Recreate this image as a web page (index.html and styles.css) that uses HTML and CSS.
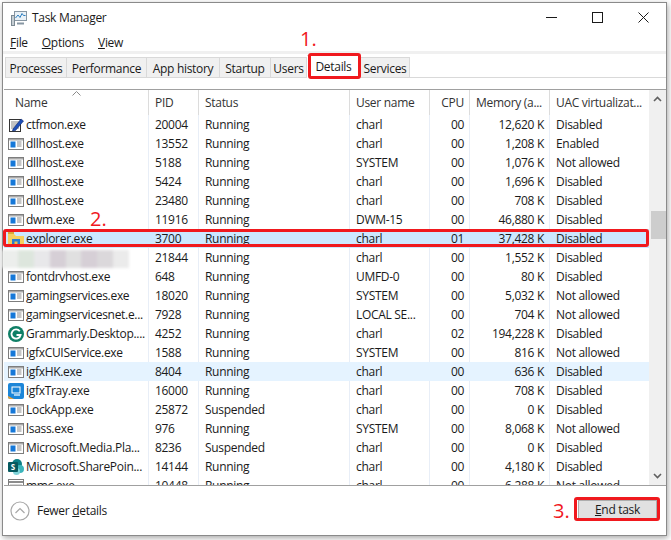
FILE: index.html
```html
<!DOCTYPE html>
<html lang="en">
<head>
<meta charset="utf-8">
<title>Task Manager</title>
<link rel="stylesheet" href="styles.css">
</head>
<body>
<svg class="defs" width="0" height="0" aria-hidden="true">
  <symbol id="exe" viewBox="0 0 16 16">
    <rect x="0.5" y="2.5" width="15" height="11" fill="#fff" stroke="#7d7d7d"/>
    <rect x="1" y="3" width="14" height="1.5" fill="#a9a9a9"/>
    <rect x="2.5" y="5.5" width="5" height="6" fill="#1678d8"/>
    <path d="M9 6h4.5M9 8h4.5M9 10h4.5" stroke="#8c8c8c"/>
  </symbol>
</svg>
<div class="window">
  <header class="titlebar">
    <svg class="app-icon" viewBox="0 0 16 16" width="16" height="16">
      <rect x="3.5" y="1.5" width="12" height="9" fill="#e9f1f7" stroke="#8796a3"/>
      <path d="M4.5 8l2.500-3 2 2.500 2-4 1.500 2h2" fill="none" stroke="#2d7fc1"/>
      <rect x="0.500" y="5.500" width="3" height="10" fill="#c5cdd3" stroke="#7c8a94"/>
      <path d="M6 13.500h7" stroke="#8796a3" stroke-width="2"/>
    </svg>
    <span class="title">Task Manager</span>
    <div class="controls">
      <svg viewBox="0 0 11 11" width="11" height="11"><path d="M0 5.500h11" stroke="#1a1a1a"/></svg>
      <svg viewBox="0 0 11 11" width="11" height="11"><rect x="0.500" y="0.500" width="10" height="10" fill="none" stroke="#1a1a1a"/></svg>
      <svg viewBox="0 0 11 11" width="11" height="11"><path d="M0.500 0.500l10 10M10.500 0.500l-10 10" stroke="#1a1a1a"/></svg>
    </div>
  </header>
  <nav class="menubar">
    <span><u>F</u>ile</span><span><u>O</u>ptions</span><span><u>V</u>iew</span>
  </nav>
  <div class="tabs-band">
    <div class="tabs">
      <span class="tab t-proc">Processes</span>
      <span class="tab t-perf">Performance</span>
      <span class="tab t-hist">App history</span>
      <span class="tab t-start">Startup</span>
      <span class="tab t-users">Users</span>
      <span class="tab active t-det">Details</span>
      <span class="tab t-serv">Services</span>
    </div>
  </div>
  <main class="panel">
    <div class="table">
      <div class="row head">
        <div class="c name">Name<svg class="sort" viewBox="0 0 9 5" width="9" height="5"><path d="M0.500 4.500l4-4 4 4" fill="none" stroke="#8a8a8a"/></svg></div>
        <div class="c">PID</div>
        <div class="c">Status</div>
        <div class="c">User name</div>
        <div class="c num">CPU</div>
        <div class="c">Memory (a...</div>
        <div class="c">UAC virtualizat...</div>
      </div>
      <div class="rows">
        <div class="row"><div class="c name"><svg class="ico" viewBox="0 0 16 16"><rect x="1.500" y="2.500" width="11" height="12" fill="#fff" stroke="#333"/><path d="M3 5h8M3 7h8M3 9h8M3 11h8" stroke="#888"/><path d="M5 12L13 2l2.500 2L7.500 13.500 4.500 14z" fill="#1e4fb8" stroke="#10286a" stroke-width=".6"/></svg>ctfmon.exe</div><div class="c">20004</div><div class="c">Running</div><div class="c">charl</div><div class="c num">00</div><div class="c num mem">12,620 K</div><div class="c">Disabled</div></div>
        <div class="row"><div class="c name"><svg class="ico"><use href="#exe"/></svg>dllhost.exe</div><div class="c">13552</div><div class="c">Running</div><div class="c">charl</div><div class="c num">00</div><div class="c num mem">1,208 K</div><div class="c">Enabled</div></div>
        <div class="row"><div class="c name"><svg class="ico"><use href="#exe"/></svg>dllhost.exe</div><div class="c">5188</div><div class="c">Running</div><div class="c">SYSTEM</div><div class="c num">00</div><div class="c num mem">1,076 K</div><div class="c">Not allowed</div></div>
        <div class="row"><div class="c name"><svg class="ico"><use href="#exe"/></svg>dllhost.exe</div><div class="c">5424</div><div class="c">Running</div><div class="c">charl</div><div class="c num">00</div><div class="c num mem">1,696 K</div><div class="c">Disabled</div></div>
        <div class="row"><div class="c name"><svg class="ico"><use href="#exe"/></svg>dllhost.exe</div><div class="c">23480</div><div class="c">Running</div><div class="c">charl</div><div class="c num">00</div><div class="c num mem">708 K</div><div class="c">Disabled</div></div>
        <div class="row"><div class="c name"><svg class="ico"><use href="#exe"/></svg>dwm.exe</div><div class="c">11916</div><div class="c">Running</div><div class="c">DWM-15</div><div class="c num">00</div><div class="c num mem">46,880 K</div><div class="c">Disabled</div></div>
        <div class="row selected"><div class="c name"><svg class="ico" viewBox="0 0 16 16"><path d="M0 3h6l2 2h8v11H0z" fill="#f6cf5f"/><path d="M0 1h6v2H0z" fill="#d9a93a"/><rect x="4" y="8" width="8" height="8" fill="#2a7fd0"/><rect x="6.500" y="10.500" width="3" height="3" fill="#f3c24a"/></svg>explorer.exe</div><div class="c">3700</div><div class="c">Running</div><div class="c">charl</div><div class="c num">01</div><div class="c num mem">37,428 K</div><div class="c">Disabled</div></div>
        <div class="row"><div class="c name"></div><div class="c">21844</div><div class="c">Running</div><div class="c">charl</div><div class="c num">00</div><div class="c num mem">1,552 K</div><div class="c">Disabled</div></div>
        <div class="row"><div class="c name"><svg class="ico"><use href="#exe"/></svg>fontdrvhost.exe</div><div class="c">648</div><div class="c">Running</div><div class="c">UMFD-0</div><div class="c num">00</div><div class="c num mem">80 K</div><div class="c">Disabled</div></div>
        <div class="row"><div class="c name"><svg class="ico"><use href="#exe"/></svg>gamingservices.exe</div><div class="c">18020</div><div class="c">Running</div><div class="c">SYSTEM</div><div class="c num">00</div><div class="c num mem">5,032 K</div><div class="c">Not allowed</div></div>
        <div class="row"><div class="c name"><svg class="ico"><use href="#exe"/></svg>gamingservicesnet.e...</div><div class="c">7928</div><div class="c">Running</div><div class="c">LOCAL SE...</div><div class="c num">00</div><div class="c num mem">704 K</div><div class="c">Not allowed</div></div>
        <div class="row"><div class="c name"><svg class="ico" viewBox="0 0 16 16"><circle cx="8" cy="8" r="8" fill="#0f7f66"/><path d="M11.800 5.300A4.600 4.600 0 1 0 12.600 9H8.500" fill="none" stroke="#fff" stroke-width="1.800"/></svg>Grammarly.Desktop....</div><div class="c">4252</div><div class="c">Running</div><div class="c">charl</div><div class="c num">02</div><div class="c num mem">194,228 K</div><div class="c">Disabled</div></div>
        <div class="row"><div class="c name"><svg class="ico"><use href="#exe"/></svg>igfxCUIService.exe</div><div class="c">1588</div><div class="c">Running</div><div class="c">SYSTEM</div><div class="c num">00</div><div class="c num mem">816 K</div><div class="c">Not allowed</div></div>
        <div class="row hover"><div class="c name"><svg class="ico"><use href="#exe"/></svg>igfxHK.exe</div><div class="c">8404</div><div class="c">Running</div><div class="c">charl</div><div class="c num">00</div><div class="c num mem">636 K</div><div class="c">Disabled</div></div>
        <div class="row"><div class="c name"><svg class="ico" viewBox="0 0 16 16"><rect x="0" y="0" width="16" height="16" rx="2" fill="#1c86d8"/><path d="M0 13l6 3H2a2 2 0 0 1-2-2z" fill="#e8a23a"/><rect x="4" y="4" width="8" height="6" fill="none" stroke="#fff"/><path d="M6 12h6" stroke="#cfe8fa" stroke-width="1.500"/></svg>igfxTray.exe</div><div class="c">16000</div><div class="c">Running</div><div class="c">charl</div><div class="c num">00</div><div class="c num mem">708 K</div><div class="c">Disabled</div></div>
        <div class="row"><div class="c name"><svg class="ico"><use href="#exe"/></svg>LockApp.exe</div><div class="c">25872</div><div class="c">Suspended</div><div class="c">charl</div><div class="c num">00</div><div class="c num mem">0 K</div><div class="c">Disabled</div></div>
        <div class="row"><div class="c name"><svg class="ico"><use href="#exe"/></svg>lsass.exe</div><div class="c">976</div><div class="c">Running</div><div class="c">SYSTEM</div><div class="c num">00</div><div class="c num mem">8,068 K</div><div class="c">Not allowed</div></div>
        <div class="row"><div class="c name"><svg class="ico"><use href="#exe"/></svg>Microsoft.Media.Pla...</div><div class="c">8236</div><div class="c">Suspended</div><div class="c">charl</div><div class="c num">00</div><div class="c num mem">0 K</div><div class="c">Disabled</div></div>
        <div class="row"><div class="c name"><svg class="ico" viewBox="0 0 16 16"><circle cx="9" cy="5" r="5" fill="#0b7f86"/><circle cx="12" cy="10" r="4" fill="#3bb4bb"/><circle cx="8.500" cy="12.500" r="3.500" fill="#7fd3d8"/><rect x="0" y="3" width="10" height="10" rx="1" fill="#05595f"/><text x="5" y="11" class="sp">S</text></svg>Microsoft.SharePoin...</div><div class="c">14144</div><div class="c">Running</div><div class="c">charl</div><div class="c num">00</div><div class="c num mem">4,180 K</div><div class="c">Disabled</div></div>
        <div class="row"><div class="c name"><svg class="ico" viewBox="0 0 16 16"><rect x="0.500" y="1.500" width="15" height="13" fill="#fff" stroke="#7d7d7d"/><path d="M1 4h14" stroke="#8c8c8c" stroke-width="2"/><path d="M2 7h12M2 9h12" stroke="#aaa"/><path d="M2 13h12" stroke="#b84a3a" stroke-width="2"/></svg>mmc.exe</div><div class="c">10448</div><div class="c">Running</div><div class="c">charl</div><div class="c num">00</div><div class="c num mem">6,288 K</div><div class="c">Not allowed</div></div>
      </div>
    </div>
    <div class="scrollbar">
      <svg viewBox="0 0 9 6" width="9" height="6"><path d="M1 5l3.500-3.500L8 5" fill="none" stroke="#606060" stroke-width="1.600"/></svg>
      <div class="track"><div class="thumb"></div></div>
      <svg viewBox="0 0 9 6" width="9" height="6"><path d="M1 1l3.500 3.500L8 1" fill="none" stroke="#606060" stroke-width="1.600"/></svg>
    </div>
  </main>
  <footer class="footer">
    <div class="fewer">
      <svg viewBox="0 0 20 20" width="20" height="20"><circle cx="10" cy="10" r="9" fill="#fff" stroke="#a8a8a8" stroke-width="1.200"/><path d="M5.500 12l4.500-4.500 4.500 4.500" fill="none" stroke="#a8a8a8" stroke-width="1.200"/></svg>
      <span>Fewer <u>d</u>etails</span>
    </div>
    <button class="end-task" type="button"><u>E</u>nd task</button>
  </footer>

  <div class="mask">
    <i class="m1"></i><i class="m2"></i><i class="m3"></i><i class="m4"></i><i class="m5"></i><i class="m6"></i><i class="m7"></i><i class="m8"></i>
  </div>
  <div class="mark mark-tab"></div>
  <div class="mark mark-row"></div>
  <div class="mark mark-btn"></div>
  <span class="step step1">1.</span>
  <span class="step step2">2.</span>
  <span class="step step3">3.</span>
</div>
</body>
</html>
```
FILE: styles.css
```css
* { box-sizing: border-box; }
html, body { margin: 0; padding: 0; }
body {
  width: 671px;
  height: 540px;
  overflow: hidden;
  background: #fff;
  font-family: "Open Sans", "Noto Sans", sans-serif;
  font-size: 12px;
  letter-spacing: -0.3px;
  color: #1a1a1a;
}
.defs { position: absolute; }
.window {
  position: relative;
  width: 665px;
  height: 534px;
  margin: 2px 0 0 2px;
  border: 1px solid #8a8a8a;
  background: #fff;
  display: flex;
  flex-direction: column;
  box-shadow: 1px 2px 6px rgba(0, 0, 0, .35);
}
.titlebar {
  height: 29px;
  flex: none;
  display: flex;
  align-items: center;
  padding: 0 0 0 8px;
}
.app-icon { flex: none; }
.title { margin-left: 5px; }
.controls {
  margin-left: auto;
  display: flex;
  gap: 35px;
  padding-right: 17px;
}
.menubar {
  height: 19px;
  flex: none;
  display: flex;
  gap: 14px;
  align-items: center;
  padding: 2px 0 0 7px;
}
.tabs-band {
  height: 38px;
  flex: none;
  border-top: 3px solid #f0f0f0;
  padding: 3px 0 0 2px;
}
.tabs {
  height: 21px;
  display: flex;
  border-bottom: 1px solid #d9d9d9;
}
.tab {
  height: 21px;
  display: flex;
  align-items: center;
  justify-content: center;
  padding-top: 1px;
  background: #f0f0f0;
  border: 1px solid #d9d9d9;
  border-left: 0;
}
.tab:first-child { border-left: 1px solid #d9d9d9; }
.tab.active { background: #fff; border-bottom-color: #fff; margin-top: -2px; height: 23px; padding-top: 0; }
.t-proc { width: 62px; }
.t-perf { width: 80px; }
.t-hist { width: 73px; }
.t-start { width: 51px; }
.t-users { width: 36px; }
.t-det { width: 54px; }
.t-serv { width: 49px; }
.panel {
  height: 397px;
  flex: none;
  margin-left: 1px;
  border-top: 1px solid #a0a0a0;
  border-bottom: 1px solid #a0a0a0;
  display: flex;
}
.table { flex: 1; min-width: 0; }
.row {
  display: grid;
  grid-template-columns: 145px 50px 151px 80px 40px 80px 100px;
  height: 19px;
  align-items: stretch;
}
.row.head { height: 25px; }
.rows { height: 370px; overflow: hidden; }
.c {
  display: flex;
  align-items: center;
  padding-left: 6px;
  border-right: 1px solid #e8eef7;
  white-space: nowrap;
  overflow: hidden;
}
.c:last-child { border-right: 0; }
.head .c { border-right-color: #dcdcdc; color: #333; }
.head .name { padding-left: 11px; position: relative; overflow: visible; }
.sort { position: absolute; left: 68px; top: 1px; }
.rows .name { padding-left: 4px; }
.num { justify-content: flex-end; padding: 0 5px 0 0; }
.mem { padding-right: 5px; }
.ico { width: 16px; height: 16px; margin-right: 2px; flex: none; }
.sp { font-size: 8px; font-weight: 700; fill: #fff; text-anchor: middle; letter-spacing: 0; }
.selected { background: #cce8ff; }
.selected .c { border-right-color: #cce8ff; }
.hover { background: #e5f3ff; }
.hover .c { border-right-color: #e5f3ff; }
.scrollbar {
  width: 17px;
  flex: none;
  background: #f0f0f0;
  display: flex;
  flex-direction: column;
  align-items: center;
  padding: 6px 0;
}
.track { flex: 1; width: 100%; padding-top: 109px; }
.thumb { height: 28px; margin-left: 2px; background: #cdcdcd; }
.footer {
  flex: 1;
  display: flex;
  align-items: center;
  justify-content: space-between;
  padding: 0 9px 0 7px;
}
.fewer { display: flex; align-items: center; gap: 7px; }
.end-task {
  width: 79px;
  height: 19px;
  margin-bottom: 2px;
  font: inherit;
  letter-spacing: inherit;
  color: inherit;
  padding: 0;
  background: #e1e1e1;
  border: 1px solid #adadad;
}
.mask {
  position: absolute;
  left: -1px;
  top: 247px;
  width: 127px;
  height: 18px;
  display: flex;
  border-radius: 0 10px 10px 0;
  filter: blur(1.5px);
}
.mask i { display: block; flex: 1; }
.m1 { background: #eceeec; }
.m2 { background: #dde6dd; }
.m3 { background: #e8e8ea; }
.m4 { background: #d6cfd6; }
.m5 { background: #e0e0e0; }
.m6 { background: #d6cfd6; }
.m7 { background: #dbd8db; }
.m8 { background: #ebebeb; }
.mark {
  position: absolute;
  border: 3px solid #f0191e;
  border-radius: 3px;
}
.mark-tab { left: 305px; top: 50px; width: 53px; height: 26px; }
.mark-row { left: 0; top: 226px; width: 646px; height: 18px; }
.mark-btn { left: 571px; top: 494px; width: 86px; height: 24px; }
.step {
  position: absolute;
  color: #f0191e;
  font-size: 20px;
  letter-spacing: 0;
  line-height: 24px;
}
.step1 { left: 297px; top: 24px; }
.step2 { left: 87px; top: 204px; }
.step3 { left: 550px; top: 496px; }
```
